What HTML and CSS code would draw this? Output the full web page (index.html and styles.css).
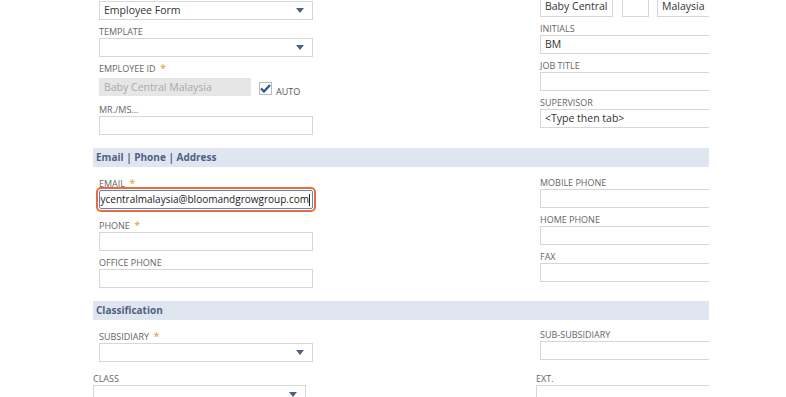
FILE: index.html
```html
<!DOCTYPE html>
<html>
<head>
	<title>Employee</title>
	<meta name="viewport" content="width=device-width, initial-scale=1.0" />
	<link rel="stylesheet" href="styles.css">
</head>
<body>
<div class="page">
	<div class="cols top">
		<div class="col">
			<div class="field first">
				<div class="select"><span>Employee Form</span><i class="arrow"></i></div>
			</div>
			<div class="field">
				<label>Template</label>
				<div class="select"><span></span><i class="arrow"></i></div>
			</div>
			<div class="field">
				<label>Employee ID <b class="req">*</b></label>
				<div class="idrow">
					<div class="input disabled">Baby Central Malaysia</div>
					<span class="check">
						<svg width="11" height="9" viewBox="0 0 11 9"><path d="M1 4.5 L4 7.5 L10 1" fill="none" stroke="#24529e" stroke-width="2.2"/></svg>
					</span>
					<span class="auto">AUTO</span>
				</div>
			</div>
			<div class="field">
				<label>Mr./Ms...</label>
				<div class="input"></div>
			</div>
		</div>
		<div class="col">
			<div class="field names">
				<div class="input n1">Baby Central</div>
				<div class="input n2"></div>
				<div class="input n3">Malaysia</div>
			</div>
			<div class="field">
				<label>Initials</label>
				<div class="input">BM</div>
			</div>
			<div class="field">
				<label>Job Title</label>
				<div class="input"></div>
			</div>
			<div class="field">
				<label>Supervisor</label>
				<div class="input">&lt;Type then tab&gt;</div>
			</div>
		</div>
	</div>

	<div class="section">Email | Phone | Address</div>

	<div class="cols">
		<div class="col">
			<div class="field email">
				<label>Email <b class="req">*</b></label>
				<div class="input focus"><span class="scroll">babycentralmalaysia@bloomandgrowgroup.com</span><i class="caret"></i></div>
			</div>
			<div class="field">
				<label>Phone <b class="req">*</b></label>
				<div class="input"></div>
			</div>
			<div class="field">
				<label>Office Phone</label>
				<div class="input"></div>
			</div>
		</div>
		<div class="col right">
			<div class="field">
				<label>Mobile Phone</label>
				<div class="input"></div>
			</div>
			<div class="field">
				<label>Home Phone</label>
				<div class="input"></div>
			</div>
			<div class="field">
				<label>Fax</label>
				<div class="input"></div>
			</div>
		</div>
	</div>

	<div class="section">Classification</div>

	<div class="cols">
		<div class="col">
			<div class="field">
				<label>Subsidiary <b class="req">*</b></label>
				<div class="select"><span></span><i class="arrow"></i></div>
			</div>
		</div>
		<div class="col right">
			<div class="field sub">
				<label>Sub-Subsidiary</label>
				<div class="input"></div>
			</div>
		</div>
	</div>

	<div class="cols wide">
		<div class="col">
			<div class="field">
				<label>Class</label>
				<div class="select"><span></span><i class="arrow"></i></div>
			</div>
		</div>
		<div class="col">
			<div class="field">
				<label>Ext.</label>
				<div class="input"></div>
			</div>
		</div>
	</div>
</div>
</body>
</html>
```

FILE: styles.css
```css
html, body {
	margin: 0;
	background: white;
}
body {
	font-family: "Open Sans", "Liberation Sans", sans-serif;
	color: #333;
}
.page {
	width: 709px;
	height: 397px;
	overflow: hidden;
}
.cols {
	display: grid;
	grid-template-columns: 214px 220px;
	column-gap: 227px;
	padding-left: 99px;
}
.col {
	display: flex;
	flex-direction: column;
	gap: 6px;
}
.field {
	display: flex;
	flex-direction: column;
}
.top .col:first-child .field.first {
	margin-top: 1px;
}
label {
	font-size: 9px;
	line-height: 12px;
	text-transform: uppercase;
	color: #666;
}
.req {
	color: #e39a2d;
	font-weight: normal;
	font-size: 11px;
	line-height: 10px;
	margin-left: 2px;
}
.input, .select {
	box-sizing: border-box;
	height: 19px;
	border: 1px solid #d6d6d6;
	background: white;
	font-size: 10.5px;
	line-height: 17px;
	padding: 0 4px;
	white-space: nowrap;
	overflow: hidden;
}
.select {
	display: flex;
	justify-content: space-between;
	align-items: center;
}
.arrow {
	width: 0;
	height: 0;
	border-left: 4.5px solid transparent;
	border-right: 4.5px solid transparent;
	border-top: 5px solid #4b6183;
	margin-right: 4px;
}
.idrow {
	display: flex;
	align-items: center;
	margin-top: 1px;
}
.input.disabled {
	width: 152px;
	height: 18px;
	background: #e6e6e6;
	border-color: #e6e6e6;
	color: #a9a9a9;
}
.check {
	box-sizing: border-box;
	width: 13px;
	height: 13px;
	border: 1px solid #bbb;
	margin-left: 8px;
	margin-top: 3px;
	display: flex;
	align-items: center;
	justify-content: center;
}
.auto {
	font-size: 9px;
	color: #555;
	margin-left: 4px;
	margin-top: 9px;
}
.names {
	flex-direction: row;
	margin-top: -3px;
}
.names .input {
	height: 20px;
}
.n1 { width: 73px; }
.n2 { width: 27px; margin-left: 9px; }
.n3 { width: 80px; margin-left: 8px; }
.section {
	margin: 13px 0 11px 93px;
	height: 19px;
	line-height: 19px;
	background: #e0e6ef;
	color: #4d6184;
	font-size: 10px;
	font-weight: bold;
	padding-left: 3px;
}
.right {
	margin-top: -1px;
	gap: 6px;
}
.email {
	margin-bottom: 5px;
}
.input.focus {
	display: flex;
	justify-content: flex-end;
	align-items: center;
	border-color: #5b86c4;
	border-radius: 2px;
	outline: 2px solid #ef6a3b;
	outline-offset: 1px;
	padding: 0 2px 0 0;
	color: #222;
	font-size: 10px;
}
.scroll {
	flex-shrink: 0;
}
.caret {
	width: 1px;
	height: 12px;
	background: #222;
	flex-shrink: 0;
}
.sub {
	margin-top: -1px;
}
.cols.wide {
	padding-left: 93px;
	grid-template-columns: 213px 220px;
	column-gap: 230px;
	margin-top: 11px;
}
```
